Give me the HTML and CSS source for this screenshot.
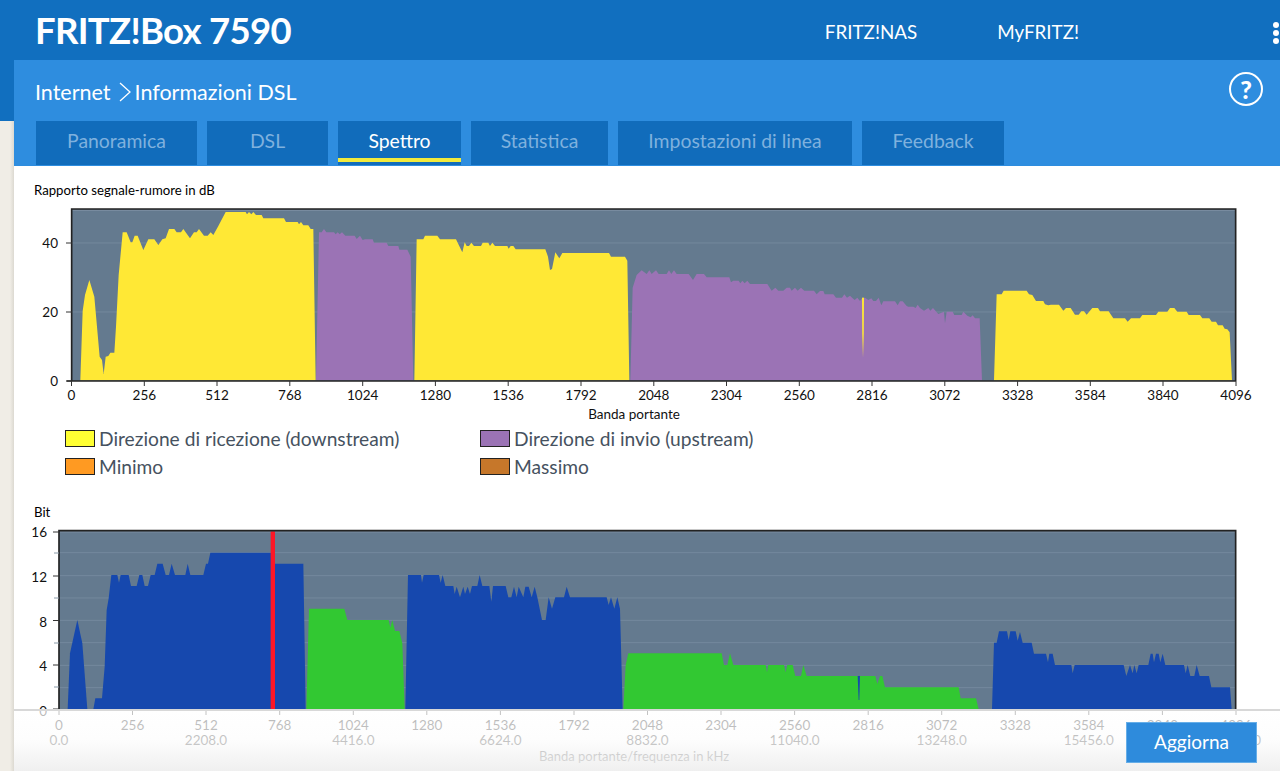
FILE: index.html
```html
<!DOCTYPE html>
<html lang="it">
<head>
<meta charset="utf-8">
<title>FRITZ!Box 7590</title>
<link rel="stylesheet" href="styles.css">
</head>
<body>
<header class="topbar">
  <h1 class="brand">FRITZ!Box 7590</h1>
  <nav class="topnav"><a class="nas">FRITZ!NAS</a><a class="myfritz">MyFRITZ!</a></nav>
  <div class="dots"><i></i><i></i><i></i></div>
</header>
<div class="shell">
  <aside class="aside"><div class="aside-top"></div><div class="aside-rest"></div></aside>
  <main class="main">
    <section class="panel">
      <div class="panel-head">
        <div class="crumb"><span>Internet</span>
          <svg class="chev" width="12" height="20" viewBox="0 0 12 20"><path d="M1 1l10 9-10 9" fill="none" stroke="#fff" stroke-width="1.3"/></svg>
          <span>Informazioni DSL</span></div>
        <div class="help">?</div>
      </div>
      <div class="tabs">
        <a class="tab">Panoramica</a><a class="tab">DSL</a><a class="tab active">Spettro</a><a class="tab">Statistica</a><a class="tab">Impostazioni di linea</a><a class="tab">Feedback</a>
      </div>
    </section>
    <section class="content">
      <div class="chart-title">Rapporto segnale-rumore in dB</div>
      <svg class="chart chart-snr" width="1266" height="225" viewBox="14 200 1266 225">
        <defs>
          <linearGradient id="sliver" x1="0" y1="0" x2="0" y2="1"><stop offset="0" stop-color="#ffe835"/><stop offset=".6" stop-color="#e8cf50"/><stop offset="1" stop-color="#9b73b5"/></linearGradient>
        </defs>
        <g transform="translate(0 200) scale(.33333)">
          <rect class="plot" x="213" y="27" width="3495" height="516"/>
          <path class="grid-top" d="M216 31H3705"/>
          <path class="grid" d="M216 129H3705M216 336H3705"/>
          <polygon class="yellow" points="241,541 248,333 255,285 268,240 283,290 299,470 306,480 311,522 317,470 325,468 331,458 343,458 348,380 356,225 368,97 380,97 392,127 397,127 404,107 413,107 430,150 445,118 463,118 475,135 487,118 497,115 507,87 523,87 530,97 543,97 550,87 570,115 582,97 590,97 597,87 612,107 623,107 632,97 640,105 655,78 677,36 737,36 741,43 747,36 754,43 760,36 768,45 785,45 790,55 852,55 858,66 893,66 897,73 903,66 910,76 925,76 932,87 940,87 947,541"/>
          <polygon class="purple" points="948,541 957,97 965,97 972,87 979,97 1002,97 1007,103 1013,97 1019,103 1026,97 1036,107 1064,107 1070,117 1080,107 1088,120 1095,118 1118,118 1122,128 1160,128 1165,138 1195,138 1198,149 1222,149 1232,170 1240,541"/>
          <polygon class="yellow" points="1243,541 1250,118 1270,118 1275,107 1312,107 1320,118 1368,118 1387,157 1394,127 1400,138 1407,138 1414,128 1422,138 1443,138 1448,128 1465,128 1470,138 1477,128 1485,138 1522,138 1526,146 1532,138 1540,138 1547,148 1636,148 1644,170 1650,210 1656,207 1666,157 1678,175 1687,159 1827,159 1833,170 1875,170 1882,182 1888,541"/>
          <polygon class="purple" points="1891,541 1898,263 1910,225 1925,211 1940,222 1948,211 1955,222 1968,211 1976,222 2000,222 2007,211 2014,222 2022,211 2030,222 2066,222 2079,240 2090,222 2112,222 2120,232 2178,232 2188,232 2193,247 2200,242 2216,242 2221,250 2227,242 2234,250 2242,242 2250,252 2302,252 2315,272 2326,263 2335,272 2350,272 2360,263 2370,263 2375,272 2385,263 2393,272 2403,263 2413,272 2442,272 2450,283 2460,273 2470,273 2474,283 2500,283 2508,293 2526,293 2533,283 2541,293 2550,287 2558,295 2564,300 2572,293 2580,303 2586,295 2595,293 2605,300 2614,295 2620,303 2628,303 2636,293 2644,316 2650,304 2685,304 2693,316 2700,304 2708,304 2720,318 2725,320 2740,320 2747,324 2753,314 2760,324 2772,332 2785,324 2791,332 2799,324 2815,342 2832,335 2835,370 2840,335 2858,335 2863,345 2885,345 2890,335 2902,347 2912,352 2918,346 2925,355 2939,355 2946,541"/>
          <rect x="2586" y="293" width="6" height="180" fill="url(#sliver)"/>
          <polygon class="yellow" points="2982,541 2990,283 3005,283 3011,272 3080,272 3087,283 3097,285 3108,303 3130,303 3135,313 3145,316 3153,314 3177,314 3190,332 3198,324 3212,324 3225,344 3236,344 3244,334 3252,334 3260,344 3277,324 3294,324 3300,334 3326,334 3340,355 3375,355 3383,365 3393,355 3420,355 3427,345 3468,345 3475,335 3502,335 3510,324 3523,324 3532,335 3560,335 3566,345 3600,345 3607,355 3628,355 3635,365 3648,365 3654,376 3668,376 3674,386 3682,388 3689,397 3696,541"/>
          <path class="frame" d="M215 543V27H3707V543"/>
          <path class="axis" d="M200 543H3708"/>
        </g>
        <path class="tick" d="M66 243h6M66 312h6M66 381h6M71.500 381v5M144.300 381v5M217 381v5M289.800 381v5M362.700 381v5M435.400 381v5M508.200 381v5M581 381v5M653.800 381v5M726.500 381v5M799.300 381v5M872 381v5M944.800 381v5M1017.600 381v5M1090.300 381v5M1163 381v5M1236 381v5"/>
        <g class="lab-y"><text x="58" y="248">40</text><text x="58" y="317">20</text><text x="58" y="386">0</text></g>
        <g class="lab-x"><text x="71.500" y="400">0</text><text x="144.300" y="400">256</text><text x="217" y="400">512</text><text x="289.800" y="400">768</text><text x="362.700" y="400">1024</text><text x="435.400" y="400">1280</text><text x="508.200" y="400">1536</text><text x="581" y="400">1792</text><text x="653.800" y="400">2048</text><text x="726.500" y="400">2304</text><text x="799.300" y="400">2560</text><text x="872" y="400">2816</text><text x="944.800" y="400">3072</text><text x="1017.600" y="400">3328</text><text x="1090.300" y="400">3584</text><text x="1163" y="400">3840</text><text x="1236" y="400">4096</text><text x="634" y="419">Banda portante</text></g>
      </svg>
      <ul class="legend">
        <li class="legend-item"><span class="swatch sw-down"></span>Direzione di ricezione (downstream)</li>
        <li class="legend-item"><span class="swatch sw-up"></span>Direzione di invio (upstream)</li>
        <li class="legend-item"><span class="swatch sw-min"></span>Minimo</li>
        <li class="legend-item"><span class="swatch sw-max"></span>Massimo</li>
      </ul>
      <div class="chart-title bit-title">Bit</div>
      <svg class="chart chart-bit" width="1266" height="250" viewBox="14 521 1266 250">
        <g transform="translate(0 490) scale(.33333)">
          <rect class="plot" x="177" y="122" width="3531" height="538"/>
          <path class="grid-top" d="M180 126H3705"/>
          <path class="grid" d="M180 188H3705M180 257H3705M180 324H3705M180 391H3705M180 458H3705M180 526H3705M180 593H3705"/>
          <polygon class="blue" points="203,658 210,490 232,390 247,460 262,658"/>
          <polygon class="blue" points="280,658 286,625 306,625 314,530 320,360 326,325 334,255 352,255 357,278 362,255 386,255 393,288 410,288 418,255 427,255 434,288 444,288 452,255 464,255 472,221 488,221 497,255 507,255 515,221 525,255 556,255 563,221 571,255 610,255 618,221 624,221 631,188 818,188 818,221 910,221 917,658"/>
          <polygon class="green" points="919,658 927,356 1033,356 1042,390 1166,390 1171,413 1177,390 1185,423 1198,423 1207,460 1214,658"/>
          <polygon class="blue" points="1216,658 1224,255 1263,255 1266,278 1271,255 1317,255 1322,278 1328,255 1336,288 1360,288 1364,312 1370,290 1380,322 1390,290 1395,312 1403,290 1410,312 1416,288 1432,288 1439,255 1447,288 1468,288 1474,335 1479,288 1517,288 1525,322 1534,322 1542,290 1550,322 1556,290 1570,322 1576,290 1586,290 1595,322 1604,290 1612,322 1626,390 1637,390 1646,322 1656,356 1666,322 1692,322 1700,290 1710,322 1820,322 1826,345 1833,322 1843,356 1852,322 1860,356 1868,658"/>
          <polygon class="green" points="1870,658 1877,525 1885,490 2165,490 2172,525 2182,525 2190,490 2200,525 2297,525 2301,547 2305,525 2352,525 2357,547 2362,525 2378,525 2386,558 2403,558 2410,525 2420,558 2626,558 2632,582 2640,558 2647,558 2655,592 2876,592 2882,625 2928,625 2936,658"/>
          <polygon class="blue" points="2573,558 2580,558 2578,630 2576,630"/>
          <polygon class="blue" points="2976,658 2982,458 2990,458 2997,424 3021,424 3026,450 3031,424 3047,424 3053,452 3060,426 3068,458 3095,458 3102,491 3138,491 3144,517 3148,491 3158,491 3165,525 3214,525 3218,550 3224,525 3371,525 3379,558 3390,525 3398,550 3403,525 3410,550 3416,525 3445,525 3452,491 3458,491 3462,517 3468,491 3476,491 3481,517 3488,491 3496,525 3552,525 3557,550 3563,525 3571,558 3583,558 3590,525 3599,558 3627,558 3634,592 3690,592 3695,658"/>
          <rect class="marker" x="812" y="124" width="13" height="534"/>
          <path class="frame" d="M177 660V122H3707V660"/>
        </g>
        <path class="tick-minor" d="M54 553h5M54 598h5M54 643h5M54 687h5"/>
        <path class="tick" d="M53 532h6M53 576h6M53 620.500h6M53 665h6M53 709h6M59 710v5M132.500 710v5M206 710v5M279.700 710v5M353.300 710v5M426.800 710v5M500.400 710v5M574 710v5M647.500 710v5M721 710v5M794.600 710v5M868.200 710v5M941.700 710v5M1015.300 710v5M1088.800 710v5M1162.400 710v5M1236 710v5"/>
        <g class="lab-y"><text x="47" y="537">16</text><text x="47" y="582">12</text><text x="47" y="627">8</text><text x="47" y="671">4</text><text x="47" y="716">0</text></g>
        <g class="lab-x"><text x="59" y="730">0</text><text x="132.500" y="730">256</text><text x="206" y="730">512</text><text x="279.700" y="730">768</text><text x="353.300" y="730">1024</text><text x="426.800" y="730">1280</text><text x="500.400" y="730">1536</text><text x="574" y="730">1792</text><text x="647.500" y="730">2048</text><text x="721" y="730">2304</text><text x="794.600" y="730">2560</text><text x="868.200" y="730">2816</text><text x="941.700" y="730">3072</text><text x="1015.300" y="730">3328</text><text x="1088.800" y="730">3584</text><text x="1162.400" y="730">3840</text><text x="1236" y="730">4096</text>
          <text x="59" y="745">0.0</text><text x="206" y="745">2208.0</text><text x="353.300" y="745">4416.0</text><text x="500.400" y="745">6624.0</text><text x="647.500" y="745">8832.0</text><text x="794.600" y="745">11040.0</text><text x="941.700" y="745">13248.0</text><text x="1088.800" y="745">15456.0</text><text x="1236" y="745">17664.0</text>
          <text class="lab-caption" x="634" y="761">Banda portante/frequenza in kHz</text></g>
      </svg>
    </section>
    <footer class="footer"><button class="refresh" type="button">Aggiorna</button></footer>
  </main>
</div>
</body>
</html>
```
FILE: styles.css
```css
* { box-sizing: border-box; }
html, body { margin: 0; padding: 0; }
body {
  width: 1280px;
  height: 771px;
  overflow: hidden;
  font-family: "Lato", "Noto Sans", sans-serif;
  background: #fff;
  position: relative;
}
.topbar {
  height: 60px;
  background: #116fbf;
  color: #fff;
  display: flex;
  align-items: center;
  padding-left: 35px;
}
.brand {
  margin: 0;
  font-size: 36.5px;
  font-weight: 700;
  line-height: 1;
  letter-spacing: -0.7px;
}
.topnav {
  margin-left: auto;
  display: flex;
  gap: 80px;
  font-size: 18.8px;
  margin-top: 3px;
}
.dots {
  display: flex;
  flex-direction: column;
  gap: 2px;
  margin-left: 194px;
  margin-right: 1px;
  margin-top: 6px;
}
.dots i {
  display: block;
  width: 6px;
  height: 6px;
  border-radius: 50%;
  background: #fff;
}
.shell {
  display: grid;
  grid-template-columns: 14px 1fr;
  height: 711px;
}
.aside {
  display: flex;
  flex-direction: column;
}
.aside-top { height: 61px; background: #116fbf; }
.aside-rest {
  flex: 1;
  background: linear-gradient(90deg, #f0ede6 0, #f0ede6 10px, #dcd9d1 14px);
}
.main { position: relative; min-width: 0; }
.panel {
  height: 106px;
  background: #2e8ddf;
  color: #fff;
}
.panel-head {
  height: 61px;
  display: flex;
  align-items: center;
  justify-content: space-between;
  padding: 0 17px 0 21px;
}
.crumb {
  display: flex;
  align-items: center;
  gap: 4px;
  font-size: 21.5px;
  margin-top: 2px;
}
.chev { margin-left: 4px; }
.help {
  width: 34px;
  height: 34px;
  border: 2.5px solid #fff;
  border-radius: 50%;
  display: flex;
  align-items: center;
  justify-content: center;
  font-size: 25px;
  font-weight: 900;
  margin-top: -3px;
}
.tabs {
  display: grid;
  grid-template-columns: 161px 121px 123px 137px 234px 142px;
  column-gap: 10px;
  margin-left: 22px;
  height: 44px;
}
.tab {
  position: relative;
  background: #116cbb;
  color: #7fb1de;
  font-size: 19.4px;
  display: flex;
  align-items: center;
  justify-content: center;
  padding-bottom: 6px;
}
.tab.active { color: #fff; }
.tab.active::after {
  content: "";
  position: absolute;
  left: 0;
  right: 0;
  bottom: 3px;
  height: 4px;
  background: #f2ea3c;
}
.content { background: #fff; height: 605px; }
.chart-title {
  font-size: 13.2px;
  line-height: 18px;
  height: 34px;
  color: #000;
  padding-left: 20px;
  padding-top: 15px;
}
.bit-title { padding-top: 28px; height: 46px; }
.chart { display: block; }
.plot { fill: #647a8f; }
.grid { stroke: #74899e; stroke-width: 3; fill: none; }
.grid-top { stroke: #7c90a3; stroke-width: 3; fill: none; }
.yellow { fill: #ffe835; }
.purple { fill: #9b73b5; }
.blue { fill: #1648ae; }
.green { fill: #32c832; }
.marker { fill: #fb1727; }
.frame { fill: none; stroke: #222; stroke-width: 5; }
.axis { stroke: #222; stroke-width: 4; }
.tick { stroke: #333; stroke-width: 1; fill: none; }
.tick-minor { stroke: #8a9aa8; stroke-width: 1; fill: none; }
.lab-x text, .lab-y text {
  font-family: "Lato", "Noto Sans", sans-serif;
  font-size: 13.5px;
  fill: #111;
}
.lab-x text { text-anchor: middle; }
.lab-y text { text-anchor: end; }
.lab-x .lab-caption { font-size: 13px; }
.legend {
  list-style: none;
  margin: 5px 0 0;
  padding: 0 0 0 51px;
  display: grid;
  grid-template-columns: 415px 1fr;
  row-gap: 11px;
  font-size: 19.2px;
  color: #465260;
}
.legend-item {
  display: flex;
  align-items: center;
  gap: 4px;
  height: 17px;
  white-space: nowrap;
}
.swatch {
  width: 30px;
  height: 17px;
  border: 1.5px solid #222;
  flex: none;
}
.sw-down { background: #ffff33; }
.sw-up { background: #9b73b5; }
.sw-min { background: #ff9a22; }
.sw-max { background: #c6772a; }
.footer {
  position: absolute;
  left: 0;
  right: 0;
  bottom: 0;
  height: 62px;
  border-top: 2px solid #d8d8d8;
  background: linear-gradient(180deg, rgba(255,255,255,.7) 0, rgba(252,252,252,.76) 50%, rgba(238,238,238,.92) 100%);
  display: flex;
  justify-content: flex-end;
  padding: 11px 23px 0 0;
}
.refresh {
  width: 131px;
  height: 41px;
  background: #2e8bdc;
  border: 1px solid #66aee8;
  color: #fff;
  font-family: inherit;
  font-size: 19px;
  padding: 0 0 3px;
}
```
